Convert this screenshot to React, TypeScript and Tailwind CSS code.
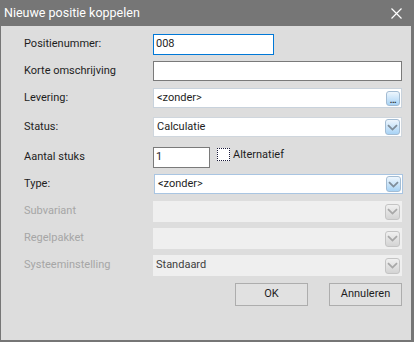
import React from "react";

const font = { fontFamily: "Roboto, 'Liberation Sans', sans-serif" };

function Chevron({ disabled }: { disabled?: boolean }) {
  return (
    <div
      className={
        "w-[15px] h-[16px] rounded-[3px] border flex items-center justify-center " +
        (disabled
          ? "border-[#c4c4c4] bg-linear-to-b from-[#f0f0f0] to-[#d4d4d4]"
          : "border-[#a3bcd3] bg-linear-to-b from-[#eef6fd] to-[#a8d3f5]")
      }
    >
      <svg width="11" height="7" viewBox="0 0 11 7">
        <path
          d="M1 1.2 L5.5 5.6 L10 1.2"
          fill="none"
          stroke={disabled ? "#a8a8a8" : "#7f8d99"}
          strokeWidth="1.8"
        />
      </svg>
    </div>
  );
}

function Row({
  label,
  disabled,
  mt,
  h,
  children,
}: {
  label: string;
  disabled?: boolean;
  mt: string;
  h: string;
  children: React.ReactNode;
}) {
  return (
    <div className={"flex items-center " + mt + " " + h}>
      <div
        className={
          "w-[152px] pl-[23px] text-[11px] " +
          (disabled ? "text-[#a6a6a6]" : "text-[#1e1e1e]")
        }
      >
        {label}
      </div>
      {children}
    </div>
  );
}

export default function App() {
  return (
    <div
      className="w-[414px] h-[342px] bg-[#767676] flex flex-col"
      style={font}
    >
      <div className="h-[26px] flex items-center justify-between pl-[4px] pr-[12px]">
        <span className="text-white text-[12.5px]">Nieuwe positie koppelen</span>
        <svg width="11" height="11" viewBox="0 0 11 11">
          <path d="M0.5 0.5 L10.5 10.5 M10.5 0.5 L0.5 10.5" stroke="#fff" strokeWidth="1.2" />
        </svg>
      </div>
      <div className="flex-1 ml-[1px] mr-[3px] mb-[2px] bg-[#dddddd] flex flex-col">
        <Row label="Positienummer:" mt="mt-[8px]" h="h-[21px]">
          <div className="w-[121px] h-[21px] bg-white border border-[#0078d7] px-[2px] flex items-center text-[11px] text-[#1e1e1e]">
            008
          </div>
        </Row>
        <Row label="Korte omschrijving" mt="mt-[6px]" h="h-[20px]">
          <div className="w-[249px] h-[20px] bg-white border border-[#7a7a7a]" />
        </Row>
        <Row label="Levering:" mt="mt-[7px]" h="h-[20px]">
          <div className="w-[249px] h-[20px] bg-white border border-[#c8d2dc] pl-[3px] pr-[1px] flex items-center justify-between text-[11px] text-[#1e1e1e]">
            <span>&lt;zonder&gt;</span>
            <div className="w-[14px] h-[15px] rounded-[3px] border border-[#a3bcd3] bg-linear-to-b from-[#eef6fd] to-[#a8d3f5] flex items-end justify-center pb-[2px]">
              <span className="text-[9px] leading-[6px] text-[#2a2a2a] font-bold tracking-[-0.5px]">...</span>
            </div>
          </div>
        </Row>
        <Row label="Status:" mt="mt-[9px]" h="h-[20px]">
          <div className="w-[249px] h-[20px] bg-white border border-[#cfd6dd] pl-[3px] pr-[1px] flex items-center justify-between text-[11px] text-[#1e1e1e]">
            <span>Calculatie</span>
            <Chevron />
          </div>
        </Row>
        <Row label="Aantal stuks" mt="mt-[10px]" h="h-[21px]">
          <div className="w-[57px] h-[21px] bg-white border border-[#7a7a7a] px-[2px] flex items-center text-[11px] text-[#1e1e1e]">
            1
          </div>
          <div className="ml-[7px] self-start mt-[1px] w-[13px] h-[13px] bg-white border border-dotted border-[#1a1a3a]" />
          <span className="ml-[3px] self-start text-[11px] leading-[15px] text-[#1e1e1e]">Alternatief</span>
        </Row>
        <Row label="Type:" mt="mt-[6px]" h="h-[20px]">
          <div className="ml-[1px] w-[249px] h-[20px] bg-white border border-[#a9c5e2] pl-[3px] pr-[1px] flex items-center justify-between text-[11px] text-[#1e1e1e]">
            <span>&lt;zonder&gt;</span>
            <Chevron />
          </div>
        </Row>
        <Row label="Subvariant" disabled mt="mt-[7px]" h="h-[21px]">
          <div className="w-[249px] h-[21px] bg-[#efefef] pl-[3px] pr-[2px] flex items-center justify-end">
            <Chevron disabled />
          </div>
        </Row>
        <Row label="Regelpakket" disabled mt="mt-[6px]" h="h-[21px]">
          <div className="w-[249px] h-[21px] bg-[#efefef] pl-[3px] pr-[2px] flex items-center justify-end">
            <Chevron disabled />
          </div>
        </Row>
        <Row label="Systeeminstelling" disabled mt="mt-[6px]" h="h-[21px]">
          <div className="w-[249px] h-[21px] bg-[#efefef] pl-[3px] pr-[2px] flex items-center justify-between text-[11px] text-[#404040]">
            <span>Standaard</span>
            <Chevron disabled />
          </div>
        </Row>
        <div className="mt-[7px] flex justify-end gap-[21px] pr-[9px]">
          <button className="w-[73px] h-[23px] bg-[#e1e1e1] border border-[#adadad] text-[11px] text-[#1e1e1e]">
            OK
          </button>
          <button className="w-[73px] h-[23px] bg-[#e1e1e1] border border-[#adadad] text-[11px] text-[#1e1e1e]">
            Annuleren
          </button>
        </div>
      </div>
    </div>
  );
}
